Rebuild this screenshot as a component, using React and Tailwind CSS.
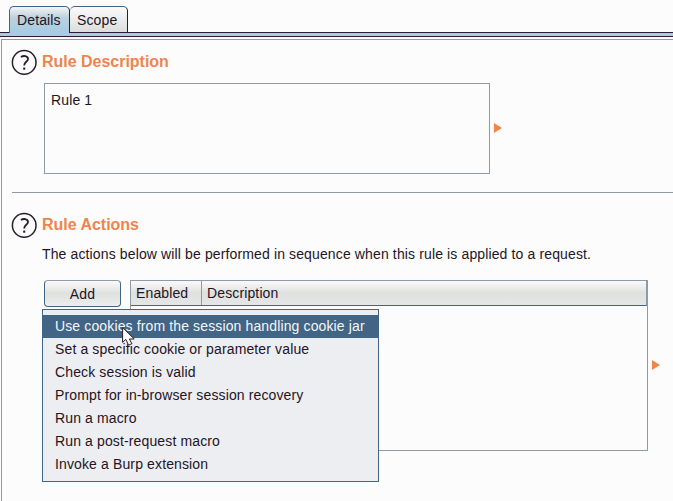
import React from "react";

const ACTIONS = [
  "Use cookies from the session handling cookie jar",
  "Set a specific cookie or parameter value",
  "Check session is valid",
  "Prompt for in-browser session recovery",
  "Run a macro",
  "Run a post-request macro",
  "Invoke a Burp extension",
];

function HelpIcon() {
  return (
    <svg className="h-[26px] w-[26px] shrink-0" viewBox="0 0 26 26" fill="none" stroke="#2b1b2c">
      <circle cx="13.2" cy="13.4" r="11.8" strokeWidth="1.5" />
      <path d="M9.9 7.9C12 6.6 17 6.3 17 9.9C17 12.8 13.2 12.8 13.2 16.4" strokeWidth="1.8" />
      <path d="M12.2 18.5h2v2.2h-2z" fill="#2b1b2c" stroke="none" />
    </svg>
  );
}

function Arrow() {
  return (
    <svg className="mb-[2px] h-[10px] w-[8px] shrink-0" viewBox="0 0 8 10">
      <path d="M0 0L8 5L0 10z" fill="#f0844c" />
    </svg>
  );
}

function Heading({ children }) {
  return (
    <div className="flex items-center gap-[5px]">
      <HelpIcon />
      <h2 className="text-[16px] leading-6 font-bold tracking-[-0.02px] whitespace-nowrap text-[#f0844c]">
        {children}
      </h2>
    </div>
  );
}

function Cursor() {
  return (
    <svg className="absolute top-[16px] left-[79px] h-[20px] w-[13px]" viewBox="0 0 13 20">
      <path d="M.6 1.4V16.4L3.8 13.4L6.6 19.2L9.8 17.7L7.4 13H12.2z" fill="#fcfcfc" stroke="#2b1b2c" />
    </svg>
  );
}

function ActionMenu() {
  return (
    <div className="absolute top-[29px] left-[-2px] h-[173px] w-[337px] border border-[#426586] bg-[#edeef2] pt-[5px]">
      {ACTIONS.map((label, i) => (
        <div
          key={label}
          className={
            "h-[23px] pl-3 leading-[23px] whitespace-nowrap " + (i === 0 ? "bg-[#426586] text-[#f4f6f8]" : "")
          }
        >
          {label}
        </div>
      ))}
      <Cursor />
    </div>
  );
}

export default function App() {
  return (
    <div className="flex h-[501px] w-[673px] flex-col overflow-hidden bg-[#fcfcfc] font-['Liberation_Sans',Arial,sans-serif] text-[14px] tracking-[0.13px] text-[#24141f]">
      <div className="z-10 flex h-8 shrink-0 items-start pt-[6px] pl-[9px]">
        <div className="h-[27px] w-[61px] rounded-t-[5px] border border-b-0 border-[#426586] border-r-[#2b1b2c] bg-linear-to-b from-[#f3f5f6] via-[#bdd1dd] via-40% to-[#a5cce4] pl-[7px] leading-[27px]">
          Details
        </div>
        <div className="h-[26px] w-[58px] rounded-t-[5px] border border-b-0 border-l-0 border-[#426586] border-r-[#2b1b2c] bg-linear-to-b from-[#fafafa] to-[#dcdedd] pl-[7px] leading-[27px]">
          Scope
        </div>
      </div>
      <div className="h-[5px] shrink-0 border-y border-[#2b1b2c] bg-[#a5cce4]" />

      <main className="mt-[2px] ml-px grow border-t border-l border-[#8f9aa7] pl-[10px]">
        <section className="-ml-px h-[152px] pt-[9px]">
          <Heading>Rule Description</Heading>
          <div className="mt-2 ml-[33px] flex items-center gap-1">
            <div className="h-[91px] w-[446px] border border-[#8f9aa7] px-[6px] pt-[7px] leading-[18px]">Rule 1</div>
            <Arrow />
          </div>
        </section>
        <section className="border-t border-[#8f9aa7] pt-[19px]">
          <div className="-ml-px">
            <Heading>Rule Actions</Heading>
          </div>
          <p className="mt-[7px] ml-[30px] leading-[18px] whitespace-nowrap">
            The actions below will be performed in sequence when this rule is applied to a request.
          </p>
          <div className="relative mt-[17px] ml-8 flex items-start">
            <button className="h-[27px] w-[77px] rounded-[4px] border border-[#426586] border-t-[#8f9aa7] bg-linear-to-b from-[#fafafa] via-[#dfe1df] to-[#eceeef] pt-px leading-[25px] tracking-[0.13px]">
              Add
            </button>
            <div className="ml-[9px] h-[171px] w-[518px] border border-[#8f9aa7]">
              <div className="flex h-[25px] border-r border-b border-r-[#8f9aa7] border-b-[#426586] bg-linear-to-b from-[#fafafa] via-[#dfe1df] to-[#e4e7e8] leading-[25px]">
                <div className="w-[71px] border-r border-[#8f9aa7] pl-[5px]">Enabled</div>
                <div className="pl-[5px]">Description</div>
              </div>
            </div>
            <div className="ml-1 self-center">
              <Arrow />
            </div>
            <ActionMenu />
          </div>
        </section>
      </main>
    </div>
  );
}
